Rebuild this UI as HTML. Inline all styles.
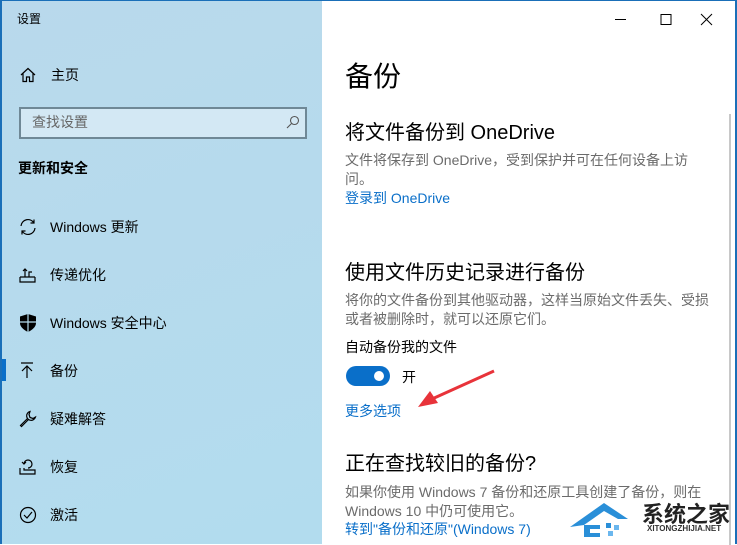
<!DOCTYPE html>
<html><head><meta charset="utf-8"><style>
*{margin:0;padding:0;box-sizing:border-box}
body{width:737px;height:544px;overflow:hidden;font-family:"Liberation Sans","Noto Sans CJK SC",sans-serif;position:relative;background:#fff}
.left{position:absolute;left:0;top:0;width:322px;height:544px;background:linear-gradient(160deg,#b9d9ec,#b2dcee);border-left:2px solid #1a6fb8;border-top:1px solid #1a6fb8}
.right{position:absolute;left:322px;top:0;width:415px;height:544px;background:#fff;border-top:1px solid #1a6fb8;border-right:2px solid #1a6fb8}
.t{position:absolute;white-space:nowrap;color:#000}
.nav{font-size:14px}
.g{color:#6b6b6b;font-size:14px;line-height:20px}
.b{color:#0a6fc9;font-size:14px}
.h{font-size:20px}
svg{position:absolute}
</style></head><body>
<div class="left">
<div class="t" style="left:15px;top:9px;font-size:12px">设置</div>
<svg style="left:18px;top:66px" width="16" height="16" viewBox="0 0 16 16" fill="none" stroke="#000" stroke-width="1.2"><path d="M1 8 L8 1.5 L15 8 M3 6.5 V14.5 H6.5 V10 H9.5 V14.5 H13 V6.5"/></svg>
<div class="t nav" style="left:49px;top:64px">主页</div>
<div style="position:absolute;left:17px;top:106px;width:288px;height:32px;border:2px solid #6f8896;background:#d3e8f4"></div>
<div class="t" style="left:30px;top:111px;font-size:14px;color:#666">查找设置</div>
<svg style="left:284px;top:114px" width="14" height="14" viewBox="0 0 14 14" fill="none" stroke="#555" stroke-width="1.1"><circle cx="8.5" cy="5.5" r="4"/><path d="M5.5 8.5 L1 13"/></svg>
<div class="t" style="left:16px;top:157px;font-size:14px;font-weight:bold">更新和安全</div>
<svg style="left:17px;top:217px" width="18" height="18" viewBox="0 0 18 18" fill="none" stroke="#000" stroke-width="1.2"><path d="M2 8 A7 7 0 0 1 15 5 M16 10 A7 7 0 0 1 3 13 M15 1.5 V5 H11.5 M3 16.5 V13 H6.5"/></svg>
<div class="t nav" style="left:48px;top:216px">Windows 更新</div>
<svg style="left:17px;top:265px" width="18" height="18" viewBox="0 0 18 18" fill="none" stroke="#000" stroke-width="1.2"><path d="M1 11 V16 H16 V11 M1 11 H16 M6 11 V3 M4 5 L6 3 L8 5 M10 11 V6 H13"/></svg>
<div class="t nav" style="left:48px;top:264px">传递优化</div>
<svg style="left:18px;top:313px" width="16" height="18" viewBox="0 0 16 18"><path d="M8 0 L16 2.5 V9 C16 13 12 16 8 18 C4 16 0 13 0 9 V2.5 Z" fill="#000"/><path d="M8 0 V18 M0 8 H16" stroke="#b5dbed" stroke-width="1.2"/></svg>
<div class="t nav" style="left:48px;top:312px">Windows 安全中心</div>
<div style="position:absolute;left:0;top:358px;width:4px;height:22px;background:#0a6fc9"></div>
<svg style="left:18px;top:361px" width="14" height="16" viewBox="0 0 14 16" fill="none" stroke="#000" stroke-width="1.2"><path d="M1 1 H13 M7 16 V4 M2 9 L7 4 L12 9"/></svg>
<div class="t nav" style="left:48px;top:360px">备份</div>
<svg style="left:17px;top:409px" width="18" height="18" viewBox="0 0 18 18" fill="none" stroke="#000" stroke-width="1.2"><path d="M11 1.5 A4.5 4.5 0 1 0 16.5 7 L14 8.5 L11 7.5 L10 4.5 Z M8.5 8.5 L1.5 15.5 L2.5 16.5 L9.5 9.5"/></svg>
<div class="t nav" style="left:48px;top:408px">疑难解答</div>
<svg style="left:17px;top:457px" width="18" height="18" viewBox="0 0 18 18" fill="none" stroke="#000" stroke-width="1.2"><path d="M1 10 V16 H16 V12 H5 V10 M5 6 A4 4 0 1 1 9 10 M3 4 L5 6 L7 4"/></svg>
<div class="t nav" style="left:48px;top:456px">恢复</div>
<svg style="left:17px;top:505px" width="18" height="18" viewBox="0 0 18 18" fill="none" stroke="#000" stroke-width="1.2"><circle cx="9" cy="9" r="7.5"/><path d="M5 9 L8 12 L13 6"/></svg>
<div class="t nav" style="left:48px;top:504px">激活</div>
</div>
<div class="right">
<svg style="left:293px;top:11px" width="100" height="14" viewBox="0 0 100 14" fill="none" stroke="#000" stroke-width="1"><path d="M0 7.5 H11 M46 2.5 H56 V12.5 H46 Z M86 2 L97 13 M97 2 L86 13"/></svg>
<div style="position:absolute;left:407px;top:113px;width:2px;height:431px;background:#c8c8c8"></div>
<div class="t" style="left:23px;top:54px;font-size:28px">备份</div>
<div class="t h" style="left:23px;top:115px">将文件备份到 OneDrive</div>
<div class="t g" style="left:23px;top:149px">文件将保存到 OneDrive，受到保护并可在任何设备上访</div>
<div class="t g" style="left:23px;top:168px">问。</div>
<div class="t b" style="left:23px;top:187px">登录到 OneDrive</div>
<div class="t h" style="left:23px;top:255px">使用文件历史记录进行备份</div>
<div class="t g" style="left:23px;top:289px">将你的文件备份到其他驱动器，这样当原始文件丢失、受损</div>
<div class="t g" style="left:23px;top:308px">或者被删除时，就可以还原它们。</div>
<div class="t" style="left:23px;top:336px;font-size:14px">自动备份我的文件</div>
<div style="position:absolute;left:24px;top:365px;width:44px;height:20px;border-radius:10px;background:#0a6fc9"></div>
<div style="position:absolute;left:52px;top:370px;width:10px;height:10px;border-radius:5px;background:#fff"></div>
<div class="t" style="left:80px;top:366px;font-size:14px">开</div>
<svg style="left:90px;top:368px" width="84" height="42" viewBox="0 0 84 42"><path d="M82 2 L20 30" stroke="#e8333a" stroke-width="3"/><path d="M6 38 L18 22 L26 34 Z" fill="#e8333a"/></svg>
<div class="t b" style="left:23px;top:400px">更多选项</div>
<div class="t h" style="left:23px;top:446px">正在查找较旧的备份?</div>
<div class="t g" style="left:23px;top:481px">如果你使用 Windows 7 备份和还原工具创建了备份，则在</div>
<div class="t g" style="left:23px;top:500px">Windows 10 中仍可使用它。</div>
<div class="t b" style="left:23px;top:518px">转到"备份和还原"(Windows 7)</div>
<svg style="left:248px;top:498px" width="80" height="44" viewBox="0 0 80 44"><path d="M0 28 L34 4 L58 20 L48 20 L34 12 L14 26 Z" fill="#2a8fd8"/><path d="M14 26 H30 V30 H20 V34 H30 V38 H14 Z" fill="#2a8fd8"/><rect x="36" y="24" width="5" height="5" fill="#2a8fd8"/><rect x="44" y="26" width="5" height="5" fill="#6bb7ee"/><rect x="38" y="32" width="5" height="5" fill="#6bb7ee"/></svg>
<div class="t" style="left:320px;top:496px;font-size:22px;font-weight:bold;color:#222">系统之家</div>
<div class="t" style="left:325px;top:523px;font-size:8px;font-weight:bold;color:#333">XITONGZHIJIA.NET</div>
</div>
</body></html>
